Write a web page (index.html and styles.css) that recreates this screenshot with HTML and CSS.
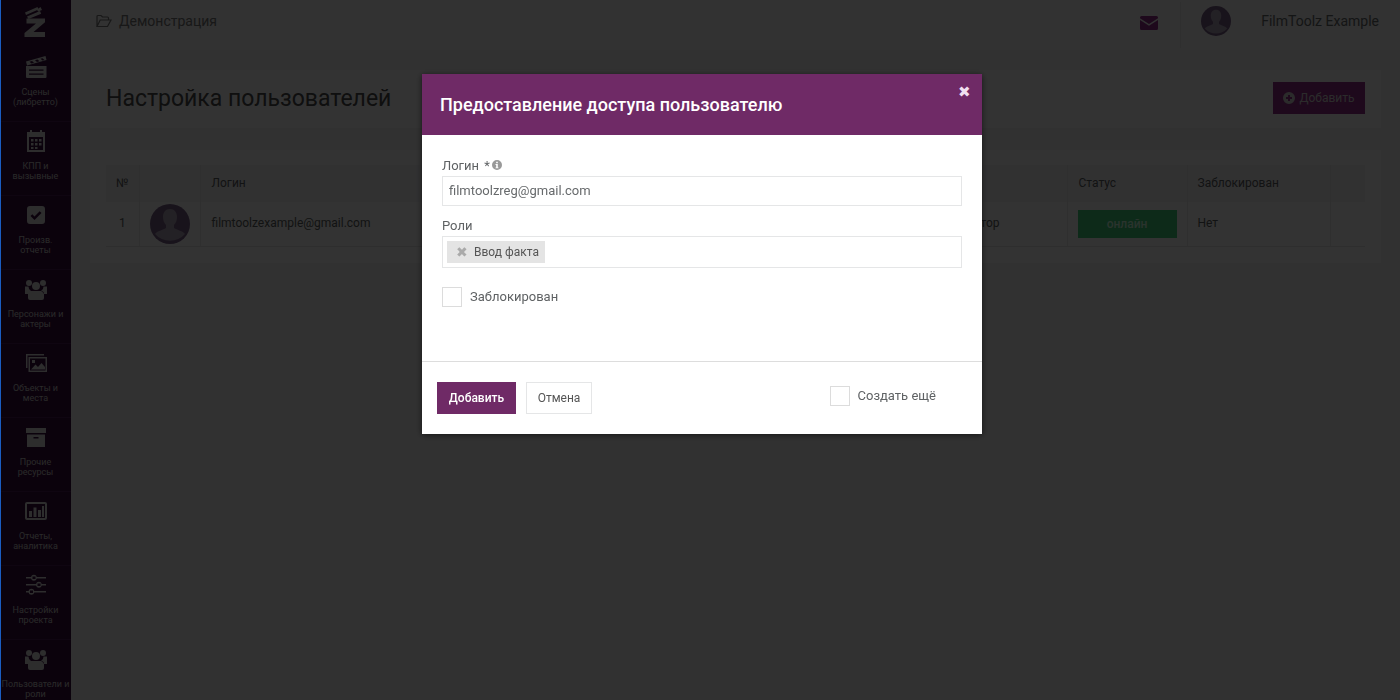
FILE: index.html
```
<!DOCTYPE html>
<html lang="ru">
<head>
<meta charset="utf-8">
<title>Настройка пользователей</title>
<link rel="stylesheet" href="styles.css">
</head>
<body>
<div class="app">
  <nav class="sidebar">
    <div class="logo">
      <svg width="28" height="38" viewBox="0 0 28 38"><path d="M3 7.500 15.500 2l1 2.500L4 10zM5 11.500 18 6l1.200 2.800L6.500 14zM15 4.500l3.500-2.500 1.500 3-4 1.500z"/><path d="M4.500 13.500H23v3.800L11.500 27H23v5H2.500v-4L14 18.500H4.500z"/></svg>
    </div>
    <a class="nav-item">
      <svg class="ni" viewBox="0 0 24 24" width="24" height="24"><path fill-rule="evenodd" d="M2 6.500 21.500 1l1 4L3 10.500zM5.500 6.800l2 1.700 2.500-.7-2-1.700zM11 5.300l2 1.700 2.500-.7-2-1.700zM16.500 3.800l2 1.700 2-.6-2-1.700z"/><path fill-rule="evenodd" d="M2 11h20.500v11a1 1 0 0 1-1 1H3a1 1 0 0 1-1-1zM5 14.500v1.200h14.500v-1.200zM5 18.500v1.200h14.500v-1.200z"/></svg>
      <span>Сцены<br>(либретто)</span>
    </a>
    <a class="nav-item">
      <svg class="ni" viewBox="0 0 24 24" width="24" height="24"><path fill-rule="evenodd" d="M3 3h3V1h2v2h8V1h2v2h3v20H3zM5 8v13h14V8zM7 10h2.500v2.500H7zM11 10h2.500v2.500H11zM15 10h2.500v2.500H15zM7 14h2.500v2.500H7zM11 14h2.500v2.500H11zM15 14h2.500v2.500H15zM7 18h2.500v2H7zM11 18h2.500v2H11z"/></svg>
      <span>КПП и<br>вызывные</span>
    </a>
    <a class="nav-item">
      <svg class="ni" viewBox="0 0 24 24" width="24" height="24"><path fill-rule="evenodd" d="M6 3h12a3 3 0 0 1 3 3v12a3 3 0 0 1-3 3H6a3 3 0 0 1-3-3V6a3 3 0 0 1 3-3zm4.500 14 7-7-1.800-1.800-5.200 5.200-2.200-2.200L6.500 13z"/></svg>
      <span>Произв.<br>отчеты</span>
    </a>
    <a class="nav-item">
      <svg class="ni wide" viewBox="0 0 24 24" width="24" height="24"><circle cx="5" cy="6" r="3"/><circle cx="19" cy="6" r="3"/><circle cx="12" cy="9" r="4"/><path d="M1 9.500h3.500A5 5 0 0 0 7 14a7 7 0 0 0-3 3H1zM23 9.500h-3.500A5 5 0 0 1 17 14a7 7 0 0 1 3 3h3zM7 14h10a3 3 0 0 1 3 3v4a2 2 0 0 1-2 2H6a2 2 0 0 1-2-2v-4a3 3 0 0 1 3-3z"/></svg>
      <span>Персонажи и<br>актеры</span>
    </a>
    <a class="nav-item">
      <svg class="ni" viewBox="0 0 24 24" width="24" height="24"><path d="M2 3h18v1.500H3.500V17H2z"/><path fill-rule="evenodd" d="M4.500 6H23v15H4.500zM6 7.500v12h15.500v-12zM7 18.500l4.500-5 2.500 2.500 3.500-4 3.500 4v2.500zM8 9h3v3H8z"/></svg>
      <span>Объекты и<br>места</span>
    </a>
    <a class="nav-item">
      <svg class="ni" viewBox="0 0 24 24" width="24" height="24"><path fill-rule="evenodd" d="M2 3h20v5H2zM3 9.500h18V22H3zM9.500 12v1.500h5V12z"/></svg>
      <span>Прочие<br>ресурсы</span>
    </a>
    <a class="nav-item">
      <svg class="ni" viewBox="0 0 24 24" width="24" height="24"><path fill-rule="evenodd" d="M3 3h18a2 2 0 0 1 2 2v14a2 2 0 0 1-2 2H3a2 2 0 0 1-2-2V5a2 2 0 0 1 2-2zm0 2v14h18V5z"/><path d="M5 12h3v6H5zM9.500 8.500h3V18h-3zM14 11h3v7h-3zM18 7h2v11h-2z"/></svg>
      <span>Отчеты,<br>аналитика</span>
    </a>
    <a class="nav-item">
      <svg class="ni" viewBox="0 0 24 24" width="24" height="24"><path fill-rule="evenodd" d="M2 4h5a3 3 0 0 1 5.800 0H22v1.500h-9.200A3 3 0 0 1 7 5.500H2zM8.500 3.500v2.500h3V3.500zM2 11h10a3 3 0 0 1 5.800 0H22v1.500h-4.200a3 3 0 0 1-5.800 0H2zM13.500 10.500V13h3v-2.500zM2 18h2.500a3 3 0 0 1 5.800 0H22v1.500H10.300a3 3 0 0 1-5.800 0H2zM6 17.500V20h3v-2.500z"/></svg>
      <span>Настройки<br>проекта</span>
    </a>
    <a class="nav-item">
      <svg class="ni wide" viewBox="0 0 24 24" width="24" height="24"><circle cx="5" cy="6" r="3"/><circle cx="19" cy="6" r="3"/><circle cx="12" cy="9" r="4"/><path d="M1 9.500h3.500A5 5 0 0 0 7 14a7 7 0 0 0-3 3H1zM23 9.500h-3.500A5 5 0 0 1 17 14a7 7 0 0 1 3 3h3zM7 14h10a3 3 0 0 1 3 3v4a2 2 0 0 1-2 2H6a2 2 0 0 1-2-2v-4a3 3 0 0 1 3-3z"/></svg>
      <span>Пользователи и<br>роли</span>
    </a>
  </nav>

  <div class="main">
    <header class="topbar">
      <div class="crumb">
        <svg width="16" height="14" viewBox="0 0 16 14"><path fill="none" stroke="currentColor" stroke-width="1.200" d="M1 12V2.500A1 1 0 0 1 2 1.500h3l1.500 1.500h5a1 1 0 0 1 1 1V6M1 12.500h10.500L15 6H4.200z"/></svg>
        <span>Демонстрация</span>
      </div>
      <div class="topbar-right">
        <div class="mail">
          <svg width="18" height="14" viewBox="0 0 18 14"><path d="M1.500 0h15A1.500 1.500 0 0 1 18 1.500v.8L9 8 0 2.300v-.8A1.500 1.500 0 0 1 1.500 0zM0 4l9 5.800L18 4v8.500a1.500 1.500 0 0 1-1.500 1.500h-15A1.500 1.500 0 0 1 0 12.500z"/></svg>
        </div>
        <div class="user">
          <svg class="avatar-sm" viewBox="0 0 40 40"><circle class="av-bg" cx="20" cy="20" r="20"/><path class="av-fg" d="M20 5c4.500 0 7 3.500 7 8 0 3-1 6-3 8v3c3 2 9 3 11 6a20 20 0 0 1-30 0c2-3 8-4 11-6v-3c-2-2-3-5-3-8 0-4.500 2.500-8 7-8z"/></svg>
          <span>FilmToolz Example</span>
        </div>
      </div>
    </header>

    <section class="title-card">
      <h1>Настройка пользователей</h1>
      <button class="add-btn">
        <svg width="12" height="12" viewBox="0 0 12 12"><path fill-rule="evenodd" d="M6 0a6 6 0 1 1 0 12A6 6 0 0 1 6 0zM5 3v2H3v2h2v2h2V7h2V5H7V3z"/></svg>
        Добавить
      </button>
    </section>

    <section class="table-card">
      <table class="users">
        <thead>
          <tr>
            <th class="c-num">№</th>
            <th class="c-av"></th>
            <th class="c-login">Логин</th>
            <th class="c-role"></th>
            <th class="c-status">Статус</th>
            <th class="c-block">Заблокирован</th>
            <th class="c-last"></th>
          </tr>
        </thead>
        <tbody>
          <tr>
            <td class="c-num">1</td>
            <td class="c-av">
              <svg class="avatar-lg" viewBox="0 0 40 40"><circle class="av-bg" cx="20" cy="20" r="20"/><path class="av-fg" d="M20 5c4.500 0 7 3.500 7 8 0 3-1 6-3 8v3c3 2 9 3 11 6a20 20 0 0 1-30 0c2-3 8-4 11-6v-3c-2-2-3-5-3-8 0-4.500 2.500-8 7-8z"/></svg>
            </td>
            <td class="c-login">filmtoolzexample@gmail.com</td>
            <td class="c-role">Администратор</td>
            <td class="c-status"><span class="online">онлайн</span></td>
            <td class="c-block">Нет</td>
            <td class="c-last"></td>
          </tr>
        </tbody>
      </table>
    </section>
  </div>
</div>

<div class="backdrop"></div>
<div class="edge"></div>

<div class="modal">
  <div class="modal-head">
    <h2>Предоставление доступа пользователю</h2>
    <span class="close">✖</span>
  </div>
  <div class="modal-body">
    <div class="field">
      <label class="lbl">Логин <span class="req">*</span><svg class="info" width="10" height="10" viewBox="0 0 10 10"><path fill-rule="evenodd" d="M5 0a5 5 0 1 1 0 10A5 5 0 0 1 5 0zM4.200 1.700v1.500h1.600V1.700zM3.500 4v1h.7v2.400h-.7v.9h3v-.9h-.7V4z"/></svg></label>
      <div class="input">filmtoolzreg@gmail.com</div>
    </div>
    <div class="field">
      <label class="lbl">Роли</label>
      <div class="input multi"><span class="tag"><span class="tag-x">✖</span>Ввод факта</span></div>
    </div>
    <div class="check-row blocked">
      <span class="box"></span>
      <span class="check-text">Заблокирован</span>
    </div>
  </div>
  <div class="modal-foot">
    <button class="btn-primary">Добавить</button>
    <button class="btn-plain">Отмена</button>
    <div class="check-row more">
      <span class="box"></span>
      <span class="check-text">Создать ещё</span>
    </div>
  </div>
</div>
</body>
</html>
```

FILE: styles.css
```
* { box-sizing: border-box; }
html, body { margin: 0; height: 100%; overflow: hidden; }
body { font-family: Roboto, "Liberation Sans", sans-serif; color: #676a6c; background: #f9f9f9; }

.app { display: flex; height: 700px; }

.sidebar { width: 71px; flex: none; background: #390d3e; color: #ffffff; overflow: hidden; }
.logo { height: 47px; display: flex; justify-content: center; padding-top: 5px; }
.logo svg { fill: #dddddd; }
.nav-item { display: flex; flex-direction: column; align-items: center; height: 74px; padding-top: 7px; border-top: 1px solid #4e1c57; text-align: center; font-size: 9px; line-height: 10px; color: #cccccc; white-space: nowrap; }
.nav-item:first-of-type { border-top: 0; padding-top: 8px; }
.nav-item .ni { fill: #e0e0e0; margin-bottom: 7px; }
.nav-item span { display: block; margin-top: 1px; }

.main { flex: 1; min-width: 0; padding: 0 0 0 19px; background: #f3f3f4; }
.topbar { margin-left: -19px; height: 50px; background: #f8f8f8; display: flex; align-items: center; justify-content: space-between; padding: 0 21px 8px 25px; }
.crumb { display: flex; align-items: center; gap: 7px; font-size: 14px; color: #777; }
.topbar-right { display: flex; align-items: center; height: 100%; }
.mail { fill: #96308c; width: 61px; height: 46px; margin-top: 8px; padding: 14px 2px 0 0; display: flex; justify-content: center; border-right: 1px solid #e8e8e8; }
.user { display: flex; align-items: center; gap: 30px; padding-left: 20px; font-size: 14px; color: #676a6c; }
.avatar-sm { width: 30px; height: 30px; display: block; }
.av-bg { fill: #7a5f88; }
.av-fg { fill: #b0a5b8; }

.title-card { margin: 20px 19px 0 0; height: 58px; background: #ffffff; display: flex; align-items: center; justify-content: space-between; padding: 0 16px 2px 16px; }
.title-card h1 { margin: 0; font-size: 23px; font-weight: 400; color: #4a4a4a; }
.add-btn { font: 12px Roboto, sans-serif; height: 32px; width: 92px; border: 0; background: #96308c; color: #d8d8d8; display: flex; align-items: center; justify-content: center; gap: 4px; padding: 0; fill: #d8d8d8; }

.table-card { margin: 22px 19px 0 0; height: 113px; background: #ffffff; padding: 15px 16px 0; }
.users { border-collapse: collapse; table-layout: fixed; width: 100%; font-size: 12px; color: #5c5f61; }
.users th { height: 37px; font-weight: 400; text-align: left; background: #f5f5f6; border-left: 1px solid #ebebeb; padding: 0 0 2px 11px; }
.users td { height: 44px; border-left: 1px solid #ebebeb; border-bottom: 1px solid #e7e7e7; padding: 0 0 2px 11px; }
.users th:first-child, .users td:first-child { border-left: 0; }
.users .c-num { width: 33px; padding-left: 0; text-align: center; }
.users .c-av { width: 61px; padding: 0 0 0 10px; }
.users .c-login { width: 690px; }
.users .c-role { width: 177px; padding-left: 20px; }
.users th.c-status { width: 120px; padding-left: 11px; }
.users td.c-status { width: 120px; padding: 0 0 0 10px; }
.users .c-block { width: 143px; padding-left: 10px; }
.avatar-lg { width: 40px; height: 40px; display: block; }
.online { display: block; width: 99px; height: 28px; line-height: 28px; text-align: center; background: #42d27e; color: #d0ffe0; font-weight: 500; }

.backdrop { position: fixed; inset: 0; background: rgba(0, 0, 0, .8); }
.edge { position: fixed; left: 0; top: 0; width: 1px; height: 700px; background: #1a5cc0; }

.modal { position: fixed; left: 422px; top: 74px; width: 560px; height: 360px; background: #ffffff; box-shadow: 0 1px 6px rgba(0, 0, 0, .6); display: flex; flex-direction: column; color: #676a6c; }
.modal-head { height: 61px; flex: none; background: #6f2a66; padding: 0 18px; display: flex; align-items: center; justify-content: space-between; position: relative; }
.modal-head h2 { margin: 0; font-size: 18px; font-weight: 500; color: #ffffff; }
.close { position: absolute; right: 11px; top: 9px; font-size: 15px; line-height: 18px; color: #f0dff0; }

.modal-body { height: 227px; flex: none; padding: 21px 20px 0; border-bottom: 1px solid #dddddd; }
.field { margin-bottom: 10px; }
.lbl { display: block; font-size: 13px; line-height: 19px; margin-bottom: 1px; color: #5f6264; }
.req { margin-left: 2px; }
.info { fill: #999999; margin-left: 2px; }
.input { height: 30px; border: 1px solid #e5e6e7; font-size: 13px; line-height: 28px; padding: 0 6px; color: #676a6c; }
.multi { height: 32px; padding: 4px; display: flex; align-items: flex-start; }
.tag { display: inline-flex; align-items: center; height: 22px; line-height: 22px; background: #e4e4e4; font-size: 12px; padding: 0 6px 0 9px; color: #555; }
.tag-x { color: #aaaaaa; font-size: 14px; line-height: 14px; margin-right: 6px; }
.check-row { display: flex; align-items: center; gap: 8px; font-size: 13px; color: #5f6264; }
.check-text { margin-bottom: 2px; }
.box { width: 20px; height: 20px; border: 1px solid #dcdcdc; background: #ffffff; flex: none; }
.blocked { margin-top: 19px; }

.modal-foot { flex: 1; display: flex; align-items: center; padding: 0 15px 0; }
.btn-primary { font: 500 12px Roboto, sans-serif; height: 32px; width: 79px; border: 0; background: #6f2a66; color: #ffffff; padding: 0; }
.btn-plain { font: 12px Roboto, sans-serif; height: 32px; width: 66px; border: 1px solid #e5e6e7; background: #ffffff; color: #555; padding: 0; margin-left: 10px; }
.more { margin-left: auto; margin-right: 31px; margin-bottom: 4px; gap: 8px; }
```
